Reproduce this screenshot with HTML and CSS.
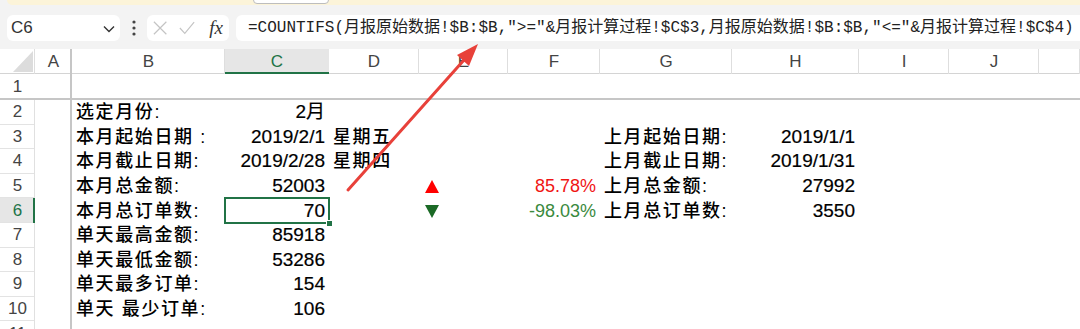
FILE: index.html
```html
<!DOCTYPE html>
<html lang="zh-CN">
<head>
  <meta charset="UTF-8" />
  <meta name="viewport" content="width=device-width, initial-scale=1.0"/>
  <title>月报计算过程</title>
  <link rel="stylesheet" href="styles.css">
</head>
<body>
<div class="app">

  <div class="notice"><span class="notice-btn"></span></div>

  <div class="formula-bar">
    <div class="name-box">
      <span>C6</span>
      <svg class="chevron" width="12" height="8" viewBox="0 0 12 8"><path d="M1 1.5 L6 6.5 L11 1.5" fill="none" stroke="#333" stroke-width="1.4"/></svg>
    </div>
    <svg class="bar-dots" width="4" height="16" viewBox="0 0 4 16">
      <circle cx="2" cy="2" r="1.6" fill="#444"/>
      <circle cx="2" cy="8" r="1.6" fill="#444"/>
      <circle cx="2" cy="14" r="1.6" fill="#444"/>
    </svg>
    <div class="fx-box">
      <svg width="16" height="16" viewBox="0 0 16 16"><path d="M1 1 L15 15 M15 1 L1 15" stroke="#c4c4c4" stroke-width="1.3"/></svg>
      <svg width="18" height="16" viewBox="0 0 18 16"><path d="M1 8 L6.5 14 L17 1.5" fill="none" stroke="#c4c4c4" stroke-width="1.3"/></svg>
      <span class="fx">fx</span>
    </div>
    <div class="formula">=COUNTIFS(月报原始数据!$B:$B,"&gt;="&amp;月报计算过程!$C$3,月报原始数据!$B:$B,"&lt;="&amp;月报计算过程!$C$4)</div>
  </div>

  <table class="sheet">
    <colgroup>
      <col class="w-hdr"><col class="w-a"><col class="w-b"><col class="w-c"><col class="w-d"><col class="w-e">
      <col class="w-f"><col class="w-g"><col class="w-h"><col class="w-i"><col class="w-j"><col>
    </colgroup>
    <thead>
      <tr>
        <th class="corner"><span class="corner-tri"></span></th>
        <th class="col-a">A</th><th>B</th><th class="active">C</th><th>D</th><th>E</th>
        <th>F</th><th>G</th><th>H</th><th>I</th><th>J</th><th></th>
      </tr>
    </thead>
    <tbody>
      <tr class="frozen">
        <th>1</th><td class="col-a"></td><td></td><td></td><td></td><td></td><td></td><td></td><td></td><td></td><td></td><td></td>
      </tr>
      <tr>
        <th>2</th><td class="col-a"></td>
        <td class="label">选定月份:</td><td class="num">2月</td>
        <td></td><td></td><td></td><td></td><td></td><td></td><td></td><td></td>
      </tr>
      <tr>
        <th>3</th><td class="col-a"></td>
        <td class="label">本月起始日期 :</td><td class="num">2019/2/1</td><td class="label">星期五</td>
        <td></td><td></td>
        <td class="label">上月起始日期:</td><td class="num">2019/1/1</td>
        <td></td><td></td><td></td>
      </tr>
      <tr>
        <th>4</th><td class="col-a"></td>
        <td class="label">本月截止日期:</td><td class="num">2019/2/28</td><td class="label">星期四</td>
        <td></td><td></td>
        <td class="label">上月截止日期:</td><td class="num">2019/1/31</td>
        <td></td><td></td><td></td>
      </tr>
      <tr>
        <th>5</th><td class="col-a"></td>
        <td class="label">本月总金额:</td><td class="num">52003</td><td></td>
        <td><span class="tri tri-up"></span></td><td class="num up">85.78%</td>
        <td class="label">上月总金额:</td><td class="num">27992</td>
        <td></td><td></td><td></td>
      </tr>
      <tr>
        <th class="active">6</th><td class="col-a"></td>
        <td class="label">本月总订单数:</td><td class="num selected">70</td><td></td>
        <td><span class="tri tri-down"></span></td><td class="num down">-98.03%</td>
        <td class="label">上月总订单数:</td><td class="num">3550</td>
        <td></td><td></td><td></td>
      </tr>
      <tr>
        <th>7</th><td class="col-a"></td>
        <td class="label">单天最高金额:</td><td class="num">85918</td>
        <td></td><td></td><td></td><td></td><td></td><td></td><td></td><td></td>
      </tr>
      <tr>
        <th>8</th><td class="col-a"></td>
        <td class="label">单天最低金额:</td><td class="num">53286</td>
        <td></td><td></td><td></td><td></td><td></td><td></td><td></td><td></td>
      </tr>
      <tr>
        <th>9</th><td class="col-a"></td>
        <td class="label">单天最多订单:</td><td class="num">154</td>
        <td></td><td></td><td></td><td></td><td></td><td></td><td></td><td></td>
      </tr>
      <tr>
        <th>10</th><td class="col-a"></td>
        <td class="label">单天 最少订单:</td><td class="num">106</td>
        <td></td><td></td><td></td><td></td><td></td><td></td><td></td><td></td>
      </tr>
      <tr>
        <th>11</th><td class="col-a"></td><td></td><td></td><td></td><td></td><td></td><td></td><td></td><td></td><td></td><td></td>
      </tr>
    </tbody>
  </table>

  <!-- red annotation arrow drawn over the sheet -->
  <svg class="arrow" width="1080" height="329" viewBox="0 0 1080 329">
    <path d="M348 190 L464 60" stroke="#e8413a" stroke-width="3" stroke-linecap="round"/>
    <polygon points="478,44 469,66 457,55" fill="#e8413a"/>
  </svg>

</div>
</body>
</html>
```

FILE: styles.css
```css
body {
  margin: 0;
  background: #fff;
  font-family: "Liberation Sans", "Noto Sans CJK SC", sans-serif;
  color: #000;
  overflow: hidden;
}

.app {
  position: relative;
  width: 1080px;
  height: 329px;
  overflow: hidden;
  background: #f3f3f3;
}

/* top notice strip */
.notice {
  height: 5px;
  margin: 0 0 0 7px;
  background: #fcf4d9;
  border-bottom-left-radius: 6px;
  position: relative;
}

.notice-btn {
  position: absolute;
  left: 246px;
  top: -4px;
  width: 74px;
  height: 6px;
  background: #fff;
  border: 1px solid #bdbdbd;
  border-radius: 0 0 4px 4px;
}

/* formula bar */
.formula-bar {
  display: flex;
  align-items: center;
  height: 26px;
  padding: 10px 0 8px 7px;
}

.name-box {
  display: flex;
  align-items: center;
  justify-content: space-between;
  width: 113px;
  height: 26px;
  box-sizing: border-box;
  padding: 0 5px 0 4px;
  background: #fff;
  border-radius: 6px;
  font-size: 17px;
  color: #333;
}

.chevron {
  margin-top: 1px;
}

.bar-dots {
  margin: 0 11px 0 12px;
}

.fx-box {
  display: flex;
  align-items: center;
  gap: 12px;
  width: 82px;
  height: 26px;
  box-sizing: border-box;
  padding: 0 6px 0 6px;
  background: #fff;
  border-radius: 6px;
}

.fx {
  margin-left: 2px;
  font-family: "Liberation Serif", serif;
  font-style: italic;
  font-size: 19px;
  color: #333;
}

.formula {
  flex: 1;
  height: 26px;
  line-height: 26px;
  margin-left: 7px;
  padding-left: 12px;
  background: #fff;
  border-radius: 6px 0 0 6px;
  font-family: "Liberation Mono", "Noto Sans CJK SC", monospace;
  font-size: 16px;
  color: #222;
  white-space: nowrap;
  overflow: hidden;
}

/* sheet grid */
.sheet {
  width: 1080px;
  table-layout: fixed;
  border-collapse: separate;
  border-spacing: 0;
  background: #fff;
}

.w-hdr { width: 35px; }
.w-a { width: 37px; }
.w-b { width: 153px; }
.w-c { width: 104px; }
.w-d { width: 90px; }
.w-e { width: 89px; }
.w-f { width: 92px; }
.w-g { width: 132px; }
.w-h { width: 127px; }
.w-i { width: 90px; }
.w-j { width: 90px; }

.sheet th {
  font-weight: normal;
  font-size: 17px;
  line-height: 20px;
  color: #444;
  padding: 0;
  text-align: center;
}

.sheet thead tr {
  height: 25px;
}

.sheet thead th {
  box-shadow: inset -1px 0 #dedede, inset 0 -1px #d4d4d4;
}

.sheet thead th.col-a {
  box-shadow: inset -2px 0 #c6c6c6, inset 0 -1px #d4d4d4;
}

.sheet thead th.active {
  background: #e6e6e6;
  color: #217346;
  box-shadow: inset 0 -2px #217346;
}

.corner {
  position: relative;
}

.corner-tri {
  position: absolute;
  right: 2px;
  bottom: 2px;
  width: 0;
  height: 0;
  border-left: 20px solid transparent;
  border-bottom: 21px solid #dcdcdc;
}

.sheet tbody tr {
  height: 24.6px;
}

.sheet tbody tr.frozen {
  height: 26px;
}

.sheet tbody th {
  box-shadow: inset -1px 0 #e0e0e0, inset 0 -1px #e3e3e3;
}

.sheet tbody th.active {
  background: #e6e6e6;
  color: #217346;
  box-shadow: inset -2px 0 #217346, inset 0 -1px #e3e3e3;
}

.sheet td {
  padding: 0 4px;
  line-height: 20px;
  white-space: nowrap;
  overflow: visible;
}

.sheet td.col-a {
  box-shadow: inset -2px 0 #c6c6c6;
}

.sheet tr.frozen td,
.sheet tr.frozen th {
  box-shadow: inset 0 -2px #c6c6c6;
}

.sheet tr.frozen td.col-a {
  box-shadow: inset -2px 0 #c6c6c6, inset 0 -2px #c6c6c6;
}

.label {
  font-size: 18px;
  font-weight: 500;
  letter-spacing: 1.6px;
}

.num {
  font-size: 19px;
  text-align: right;
  -webkit-text-stroke: 0.2px #000;
}

.up {
  color: #f01414;
  font-size: 18px;
  -webkit-text-stroke: 0;
}

.down {
  color: #3a8a3e;
  font-size: 18px;
  -webkit-text-stroke: 0;
}

.tri {
  display: inline-block;
  width: 0;
  height: 0;
  margin-left: 2px;
  vertical-align: middle;
  border-left: 7px solid transparent;
  border-right: 7px solid transparent;
}

.tri-up {
  border-bottom: 13px solid #f00;
}

.tri-down {
  border-top: 13px solid #1b6a26;
}

.selected {
  position: relative;
  outline: 2px solid #217346;
  outline-offset: -1px;
}

.selected::after {
  content: "";
  position: absolute;
  right: -4px;
  bottom: -4px;
  width: 5px;
  height: 5px;
  background: #217346;
  border: 1px solid #fff;
}

/* annotation */
.arrow {
  position: absolute;
  left: 0;
  top: 0;
  pointer-events: none;
}
```
